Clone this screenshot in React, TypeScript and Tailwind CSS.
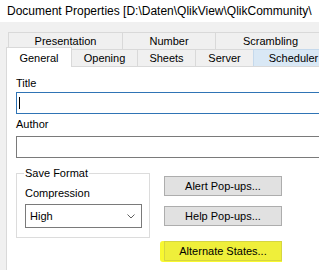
export default function App() {
  return (
    <div className="w-[319px] h-[270px] overflow-hidden bg-[#f0f0f0] text-black font-['Liberation_Sans',Arial,sans-serif] flex flex-col">
      {/* title bar */}
      <div className="h-[22px] bg-white pl-[7px] text-[12px] leading-[22px] whitespace-nowrap overflow-hidden">
        Document Properties [D:\Daten\QlikView\QlikCommunity\
      </div>

      {/* tab rows */}
      <div className="mt-[10px] text-[11px]">
        <div className="ml-[8px] flex h-[17px] whitespace-nowrap">
          <div className="w-[114px] shrink-0 border-t border-l border-[#d9d9d9] flex items-center justify-center">Presentation</div>
          <div className="w-[93px] shrink-0 border-t border-l border-[#d9d9d9] flex items-center justify-center">Number</div>
          <div className="w-[110px] shrink-0 border-t border-l border-[#d9d9d9] flex items-center justify-center">Scrambling</div>
        </div>
        <div className="ml-[6px] flex items-end h-[17px] whitespace-nowrap">
          <div className="relative z-10 -mb-px w-[66px] h-[20px] shrink-0 bg-white border-t border-l border-r border-[#d9d9d9] flex items-center justify-center pt-px">General</div>
          <div className="w-[65px] h-[17px] shrink-0 border-t border-[#d9d9d9] flex items-center justify-center">Opening</div>
          <div className="w-[58px] h-[17px] shrink-0 border-t border-l border-[#d9d9d9] flex items-center justify-center">Sheets</div>
          <div className="w-[58px] h-[17px] shrink-0 border-t border-l border-[#d9d9d9] flex items-center justify-center">Server</div>
          <div className="w-[80px] h-[17px] shrink-0 border-t border-l border-[#c5d9ec] bg-[#d9e8f5] flex items-center justify-center">Scheduler</div>
        </div>
      </div>

      {/* panel */}
      <div className="flex-1 ml-[6px] bg-white border-t border-l border-[#d9d9d9] pl-[9px] pt-[10px] text-[11px] leading-[13px] whitespace-nowrap">
        <div>Title</div>
        <div className="mt-[2px] w-[320px] h-[22px] border border-[#2f74b5] flex items-center pl-[2px]">
          <div className="w-px h-[12px] bg-black" />
        </div>
        <div className="mt-[4px]">Author</div>
        <div className="mt-[5px] w-[320px] h-[22px] border border-[#7a7a7a]" />

        <div className="mt-[9px] flex items-start">
          <fieldset className="w-[134px] border border-[#dcdcdc] pl-[8px] pb-[9px]">
            <legend className="ml-[-1px] px-[1px] leading-[13px]">Save Format</legend>
            <div className="mt-[7px]">Compression</div>
            <div className="mt-[4px] w-[117px] h-[24px] border border-[#7a7a7a] bg-white flex items-center justify-between pl-[4px] pr-[6px]">
              <span>High</span>
              <svg width="8" height="5" viewBox="0 0 8 5" fill="none">
                <path d="M0.5 0.5 L4 4 L7.5 0.5" stroke="#606060" strokeWidth="1" />
              </svg>
            </div>
          </fieldset>

          <div className="ml-[14px] mt-[9px] flex flex-col">
            <div className="w-[118px] h-[20px] bg-[#e1e1e1] border border-[#adadad] flex items-center justify-center">Alert Pop-ups...</div>
            <div className="mt-[10px] w-[118px] h-[20px] bg-[#e1e1e1] border border-[#adadad] flex items-center justify-center">Help Pop-ups...</div>
            <div className="mt-[15px] -ml-[4px] pl-[4px] h-[21px] bg-[#f8f830] rounded-l-[3px]">
              <div className="w-[118px] h-[20px] bg-[#efef3a] border border-[#d6d640] flex items-center justify-center">Alternate States...</div>
            </div>
          </div>
        </div>
      </div>
    </div>
  );
}
